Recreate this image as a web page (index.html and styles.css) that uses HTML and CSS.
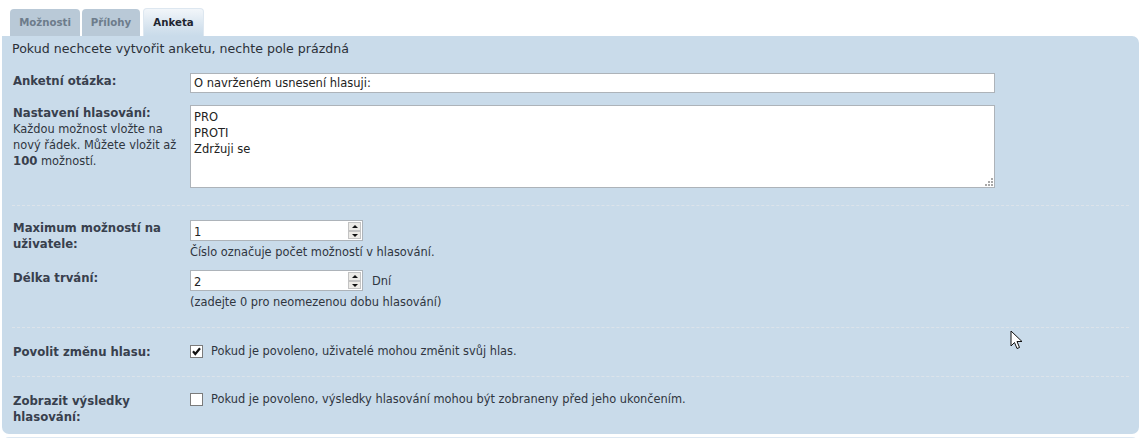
FILE: index.html
```html
<!DOCTYPE html>
<html lang="cs">
<head>
<meta charset="utf-8">
<title>Anketa</title>
<link rel="stylesheet" href="styles.css">
</head>
<body>
<div class="page">
  <ul class="tabs">
    <li class="tab t1">Možnosti</li>
    <li class="tab t2">Přílohy</li>
    <li class="tab t3 active">Anketa</li>
  </ul>
  <div class="panel">
    <p class="intro">Pokud nechcete vytvořit anketu, nechte pole prázdná</p>

    <div class="section first">
      <div class="row">
        <div class="label"><b>Anketní otázka:</b></div>
        <div class="field"><input class="text" type="text" value="O navrženém usnesení hlasuji:"></div>
      </div>
      <div class="row gap12">
        <div class="label"><b>Nastavení hlasování:</b><br>Každou možnost vložte na nový řádek. Můžete vložit až <b>100</b> možností.</div>
        <div class="field areawrap"><textarea class="area">PRO
PROTI
Zdržuji se</textarea><span class="grip"><svg width="8" height="8" viewBox="0 0 8 8"><g fill="#a9a9a9"><rect x="6" y="0" width="2" height="2"/><rect x="3" y="3" width="2" height="2"/><rect x="6" y="3" width="2" height="2"/><rect x="0" y="6" width="2" height="2"/><rect x="3" y="6" width="2" height="2"/><rect x="6" y="6" width="2" height="2"/></g></svg></span></div>
      </div>
    </div>

    <div class="section sec2">
      <div class="row">
        <div class="label"><b>Maximum možností na uživatele:</b></div>
        <div class="field">
          <div class="numwrap">
            <span class="num"><input type="text" value="1"><span class="spin"><span class="up"></span><span class="down"></span></span></span>
          </div>
          <div class="hint">Číslo označuje počet možností v hlasování.</div>
        </div>
      </div>
      <div class="row gap10">
        <div class="label"><b>Délka trvání:</b></div>
        <div class="field">
          <div class="numwrap">
            <span class="num"><input type="text" value="2"><span class="spin"><span class="up"></span><span class="down"></span></span></span>
            <span class="unit">Dní</span>
          </div>
          <div class="hint">(zadejte 0 pro neomezenou dobu hlasování)</div>
        </div>
      </div>
    </div>

    <div class="section sec3">
      <div class="row">
        <div class="label"><b>Povolit změnu hlasu:</b></div>
        <div class="field check">
          <span class="box"><svg width="11" height="11" viewBox="0 0 11 11"><path d="M2 5.3 L4.3 8 L9 2.3" fill="none" stroke="#111" stroke-width="2.2"/></svg></span>
          <span class="ctext">Pokud je povoleno, uživatelé mohou změnit svůj hlas.</span>
        </div>
      </div>
    </div>

    <div class="section sec4">
      <div class="row">
        <div class="label"><b>Zobrazit výsledky hlasování:</b></div>
        <div class="field check check4">
          <span class="box"></span>
          <span class="ctext">Pokud je povoleno, výsledky hlasování mohou být zobraneny před jeho ukončením.</span>
        </div>
      </div>
    </div>
  </div>
  <div class="panel-next"></div>
  <svg class="cursor" width="14" height="20" viewBox="0 0 14 20"><path d="M1 1 L1 16 L4.5 12.5 L7 18.5 L9.5 17.5 L7 11.5 L12 11.5 Z" fill="#fff" stroke="#111" stroke-width="1" stroke-linejoin="miter"/></svg>
</div>
</body>
</html>
```

FILE: styles.css
```css
* { box-sizing: border-box; }
html, body { margin: 0; padding: 0; background: #fff; }
body {
  font-family: "DejaVu Sans", Verdana, sans-serif;
  font-size: 11.4px;
  color: #2f3540;
}
.page { position: relative; padding: 8px 9px 0 2px; }
.tabs {
  list-style: none;
  margin: 0 0 0 8px;
  padding: 0;
  display: flex;
  gap: 2px;
  align-items: flex-end;
  height: 28px;
}
.tab {
  height: 27px;
  padding: 0;
  text-align: center;
  line-height: 27px;
  font-weight: bold;
  font-size: 10.2px;
  color: #6d7c8b;
  background: #b9c9d7;
  border-radius: 4px 4px 0 0;
}
.t1 { width: 70px; }
.t2 { width: 58px; }
.t3 { width: 61px; }
.tab.active {
  height: 28px;
  margin-left: 1px;
  color: #1e2530;
  background: linear-gradient(#f2f6fa, #d4e2ee 70%, #c9dbea);
  border: 1px solid #dde7f0;
  border-bottom: none;
  line-height: 27px;
}
.panel {
  background: #c9dbea;
  border-radius: 0 7px 7px 7px;
  padding: 4px 10px 8px 10px;
}
.intro {
  margin: 0;
  font-size: 12.6px;
  line-height: 17px;
  color: #2b3038;
}
.section { border-top: 1px dashed #dce3ea; }
.section.first { border-top: none; padding-top: 16px; padding-bottom: 17px; }
.sec2 { padding-top: 14px; padding-bottom: 17px; }
.sec3 { padding-top: 16px; padding-bottom: 16px; }
.sec4 { padding-top: 16px; padding-bottom: 1px; }
.row {
  display: grid;
  grid-template-columns: 166px 1fr;
  column-gap: 11px;
  align-items: start;
  padding-left: 1px;
}
.gap12 { margin-top: 12px; }
.gap10 { margin-top: 10px; }
.label { line-height: 16px; margin-top: 0; }
.label b { color: #38404d; font-size: 11.7px; }
.text {
  display: block;
  width: 805px;
  height: 20px;
  border: 1px solid #adb3b9;
  padding: 1px 3px;
  font: inherit;
  font-size: 11.5px;
  color: #222;
  background: #fff;
}
.areawrap { position: relative; width: 805px; }
.area {
  display: block;
  width: 805px;
  height: 83px;
  border: 1px solid #adb3b9;
  padding: 3px 3px;
  font: inherit;
  font-size: 11.5px;
  line-height: 16px;
  color: #222;
  background: #fff;
  resize: none;
}
.grip { position: absolute; right: 2px; bottom: 2px; line-height: 0; }
.numwrap { display: flex; align-items: center; gap: 9px; }
.num {
  display: flex;
  width: 173px;
  height: 21px;
  border: 1px solid #adb3b9;
  background: #fff;
}
.num input {
  flex: 1;
  min-width: 0;
  border: none;
  outline: none;
  padding: 2px 3px 0;
  font: inherit;
  font-size: 11.5px;
  color: #222;
  background: transparent;
}
.spin {
  width: 13px;
  display: flex;
  flex-direction: column;
  margin: 1px 1px 1px 0;
}
.spin span {
  flex: 1;
  background: #eceae6;
  border: 1px solid #c3c3c3;
  position: relative;
}
.spin .up::after, .spin .down::after {
  content: "";
  position: absolute;
  left: 3px;
  top: 2px;
  border-left: 3px solid transparent;
  border-right: 3px solid transparent;
}
.spin .up::after { border-bottom: 3px solid #111; }
.spin .down::after { border-top: 3px solid #111; top: 2px; }
.unit { color: #2f3540; }
.hint { margin-top: 3px; line-height: 16px; }
.check { display: flex; align-items: center; gap: 8px; height: 16px; margin-top: -1px; }
.check4 { margin-top: -2px; }
.box {
  width: 13px;
  height: 13px;
  border: 1px solid #7b7b7b;
  background: #fff;
  display: flex;
  align-items: center;
  justify-content: center;
}
.ctext { font-size: 11.4px; color: #2f3540; }
.panel-next {
  margin-top: 3px;
  height: 10px;
  background: #c9dbea;
  border-top: 1px solid #dde8f2;
  border-radius: 7px 7px 0 0;
}
.cursor { position: absolute; left: 1010px; top: 330px; }
```
